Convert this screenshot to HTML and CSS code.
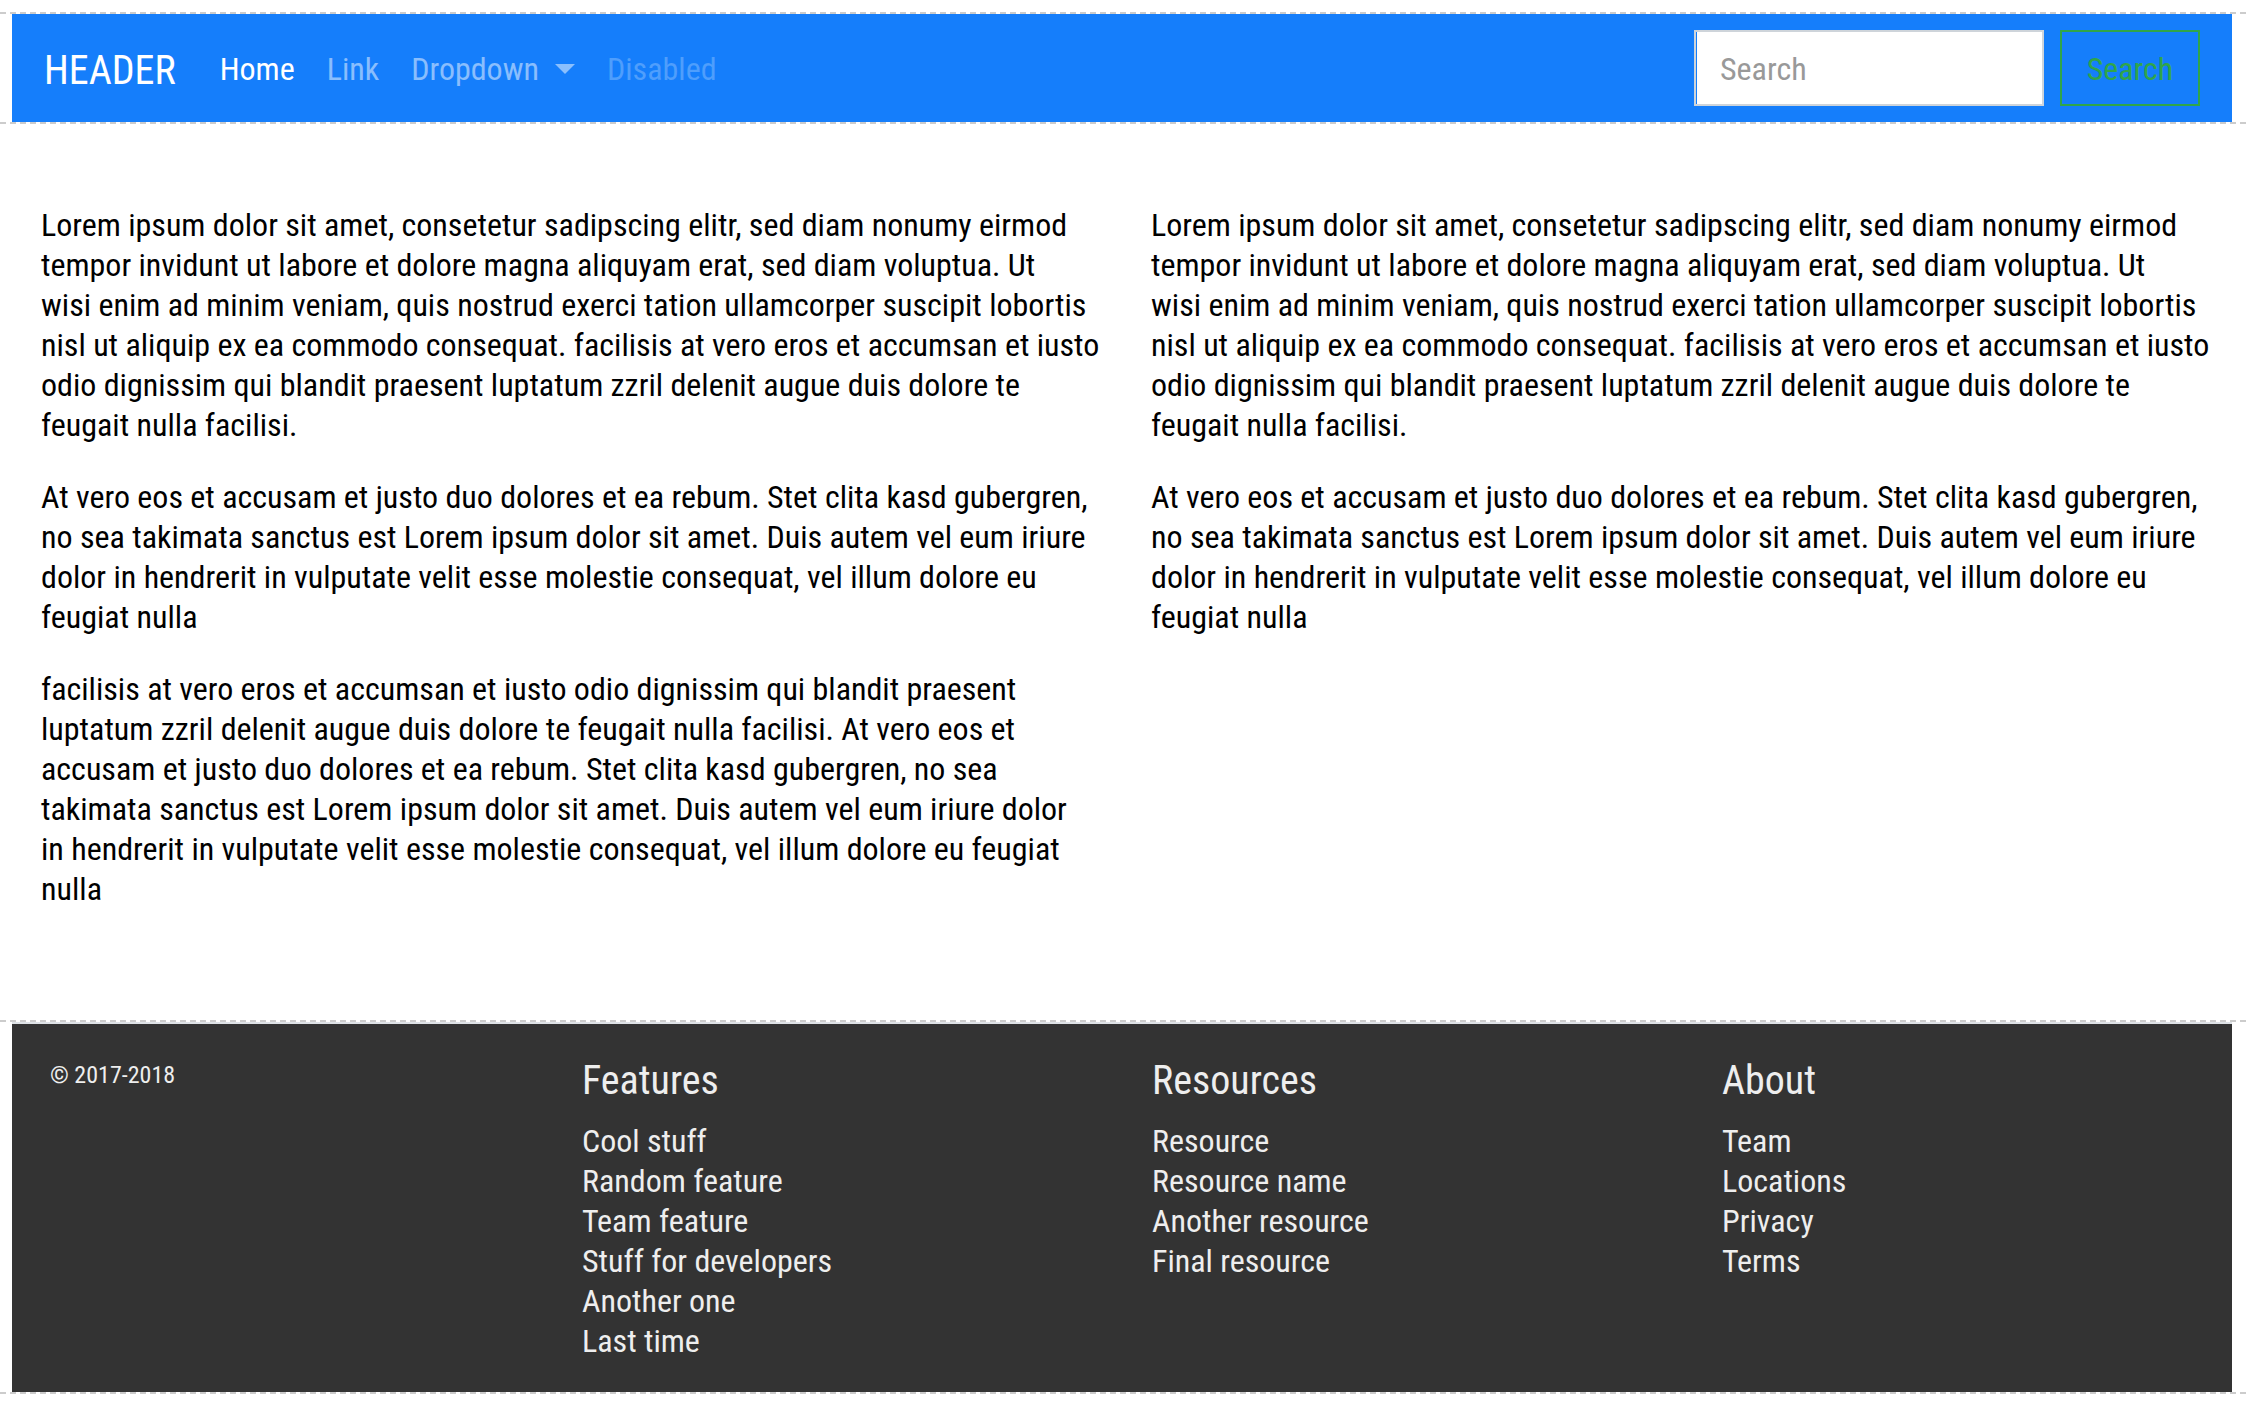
FILE: index.html
```
<!DOCTYPE html>
<html lang="en">
<head>
<meta charset="utf-8">
<title>Header</title>
<link rel="stylesheet" href="styles.css">
</head>
<body>
<header class="band">
  <nav class="navbar">
    <a class="brand" href="#">HEADER</a>
    <ul class="nav">
      <li><a class="nav-link active" href="#">Home</a></li>
      <li><a class="nav-link" href="#">Link</a></li>
      <li><a class="nav-link caret" href="#" aria-haspopup="true">Dropdown</a></li>
      <li><a class="nav-link disabled" href="#" aria-disabled="true">Disabled</a></li>
    </ul>
    <form class="search">
      <input class="search-input" type="search" placeholder="Search" aria-label="Search">
      <button class="search-button" type="submit">Search</button>
    </form>
  </nav>
</header>
<main class="columns">
  <section>
    <p>Lorem ipsum dolor sit amet, consetetur sadipscing elitr, sed diam nonumy eirmod tempor invidunt ut labore et dolore magna aliquyam erat, sed diam voluptua. Ut<br>wisi enim ad minim veniam, quis nostrud exerci tation ullamcorper suscipit lobortis nisl ut aliquip ex ea commodo consequat. facilisis at vero eros et accumsan et iusto<br>odio dignissim qui blandit praesent luptatum zzril delenit augue duis dolore te feugait nulla facilisi.</p>
    <p>At vero eos et accusam et justo duo dolores et ea rebum. Stet clita kasd gubergren, no sea takimata sanctus est Lorem ipsum dolor sit amet. Duis autem vel eum iriure dolor in hendrerit in vulputate velit esse molestie consequat, vel illum dolore eu feugiat nulla</p>
    <p>facilisis at vero eros et accumsan et iusto odio dignissim qui blandit praesent luptatum zzril delenit augue duis dolore te feugait nulla facilisi. At vero eos et accusam et justo duo dolores et ea rebum. Stet clita kasd gubergren, no sea takimata sanctus est Lorem ipsum dolor sit amet. Duis autem vel eum iriure dolor<br>in hendrerit in vulputate velit esse molestie consequat, vel illum dolore eu feugiat nulla</p>
  </section>
  <section>
    <p>Lorem ipsum dolor sit amet, consetetur sadipscing elitr, sed diam nonumy eirmod tempor invidunt ut labore et dolore magna aliquyam erat, sed diam voluptua. Ut<br>wisi enim ad minim veniam, quis nostrud exerci tation ullamcorper suscipit lobortis nisl ut aliquip ex ea commodo consequat. facilisis at vero eros et accumsan et iusto<br>odio dignissim qui blandit praesent luptatum zzril delenit augue duis dolore te feugait nulla facilisi.</p>
    <p>At vero eos et accusam et justo duo dolores et ea rebum. Stet clita kasd gubergren, no sea takimata sanctus est Lorem ipsum dolor sit amet. Duis autem vel eum iriure dolor in hendrerit in vulputate velit esse molestie consequat, vel illum dolore eu feugiat nulla</p>
  </section>
</main>
<footer class="band">
  <div class="footer">
    <div class="footer-row">
      <small class="copyright">© 2017-2018</small>
      <div>
        <h5>Features</h5>
        <ul>
          <li><a href="#">Cool stuff</a></li>
          <li><a href="#">Random feature</a></li>
          <li><a href="#">Team feature</a></li>
          <li><a href="#">Stuff for developers</a></li>
          <li><a href="#">Another one</a></li>
          <li><a href="#">Last time</a></li>
        </ul>
      </div>
      <div>
        <h5>Resources</h5>
        <ul>
          <li><a href="#">Resource</a></li>
          <li><a href="#">Resource name</a></li>
          <li><a href="#">Another resource</a></li>
          <li><a href="#">Final resource</a></li>
        </ul>
      </div>
      <div>
        <h5>About</h5>
        <ul>
          <li><a href="#">Team</a></li>
          <li><a href="#">Locations</a></li>
          <li><a href="#">Privacy</a></li>
          <li><a href="#">Terms</a></li>
        </ul>
      </div>
    </div>
  </div>
</footer>
</body>
</html>
```
FILE: styles.css
```
* { box-sizing: border-box; }
body {
  margin: 0;
  padding-top: 12px;
  background: #fff;
  color: #000;
  font: 32px/40px "Roboto Condensed", Roboto, "Liberation Sans", sans-serif;
}
ul { margin: 0; padding: 0; list-style: none; }
a { color: inherit; text-decoration: none; }

/* Full-width row between two dashed rules */
.band {
  padding: 0 14px 0 12px;
  border: 0 dashed #ccc;
  border-width: 2px 0;
}

.navbar {
  display: flex;
  align-items: center;
  padding: 16px 32px;
  background: #157efb;
  color: #fff;
}
.brand {
  padding-top: 6px;
  margin-right: 28px;
  font-size: 40px;
  line-height: 60px;
}
.nav { display: flex; }
.nav-link {
  display: flex;
  align-items: center;
  padding: 2px 16px 0;
  color: rgba(255, 255, 255, .5);
}
.nav-link.active { color: #fff; }
.nav-link.disabled { color: rgba(255, 255, 255, .25); }
.caret::after {
  content: "";
  margin-left: 16px;
  border: 10px solid transparent;
  border-top-color: currentColor;
  border-bottom: 0;
}

.search { display: flex; gap: 16px; margin-left: auto; }
.search-input,
.search-button {
  height: 76px;
  margin: 0;
  border: 2px solid #ced4da;
  border-radius: 0;
  font: inherit;
}
.search-input {
  width: 350px;
  padding: 2px 24px 0;
  background: #fff;
  box-shadow: inset 1px 0 #157efb;
  appearance: none;
}
.search-input::placeholder { color: #999; opacity: 1; }
.search-button {
  width: 140px;
  padding: 2px 0 0;
  border-color: #30a54a;
  background: transparent;
  color: #30a54a;
}

.columns {
  display: grid;
  grid-template-columns: 1fr 1fr;
  gap: 46px;
  padding: 81px 31px 79px 41px;
}
.columns p { margin: 0 0 32px; }

.footer {
  overflow: hidden;
  padding: 33px 0 31px;
  border-top: 2px solid #dee2e6;
  background: #333;
  color: #eee;
}
.footer-row {
  display: grid;
  grid-template-columns: repeat(4, 1fr);
  margin: 0 -30px;
}
.footer-row > * { padding: 0 30px; }
.footer-row > .copyright {
  padding-left: 68px;
  font-size: 24px;
  line-height: 36px;
}
h5 {
  margin: 0 0 16px;
  font-size: 40px;
  font-weight: 400;
  line-height: 48px;
}
```
